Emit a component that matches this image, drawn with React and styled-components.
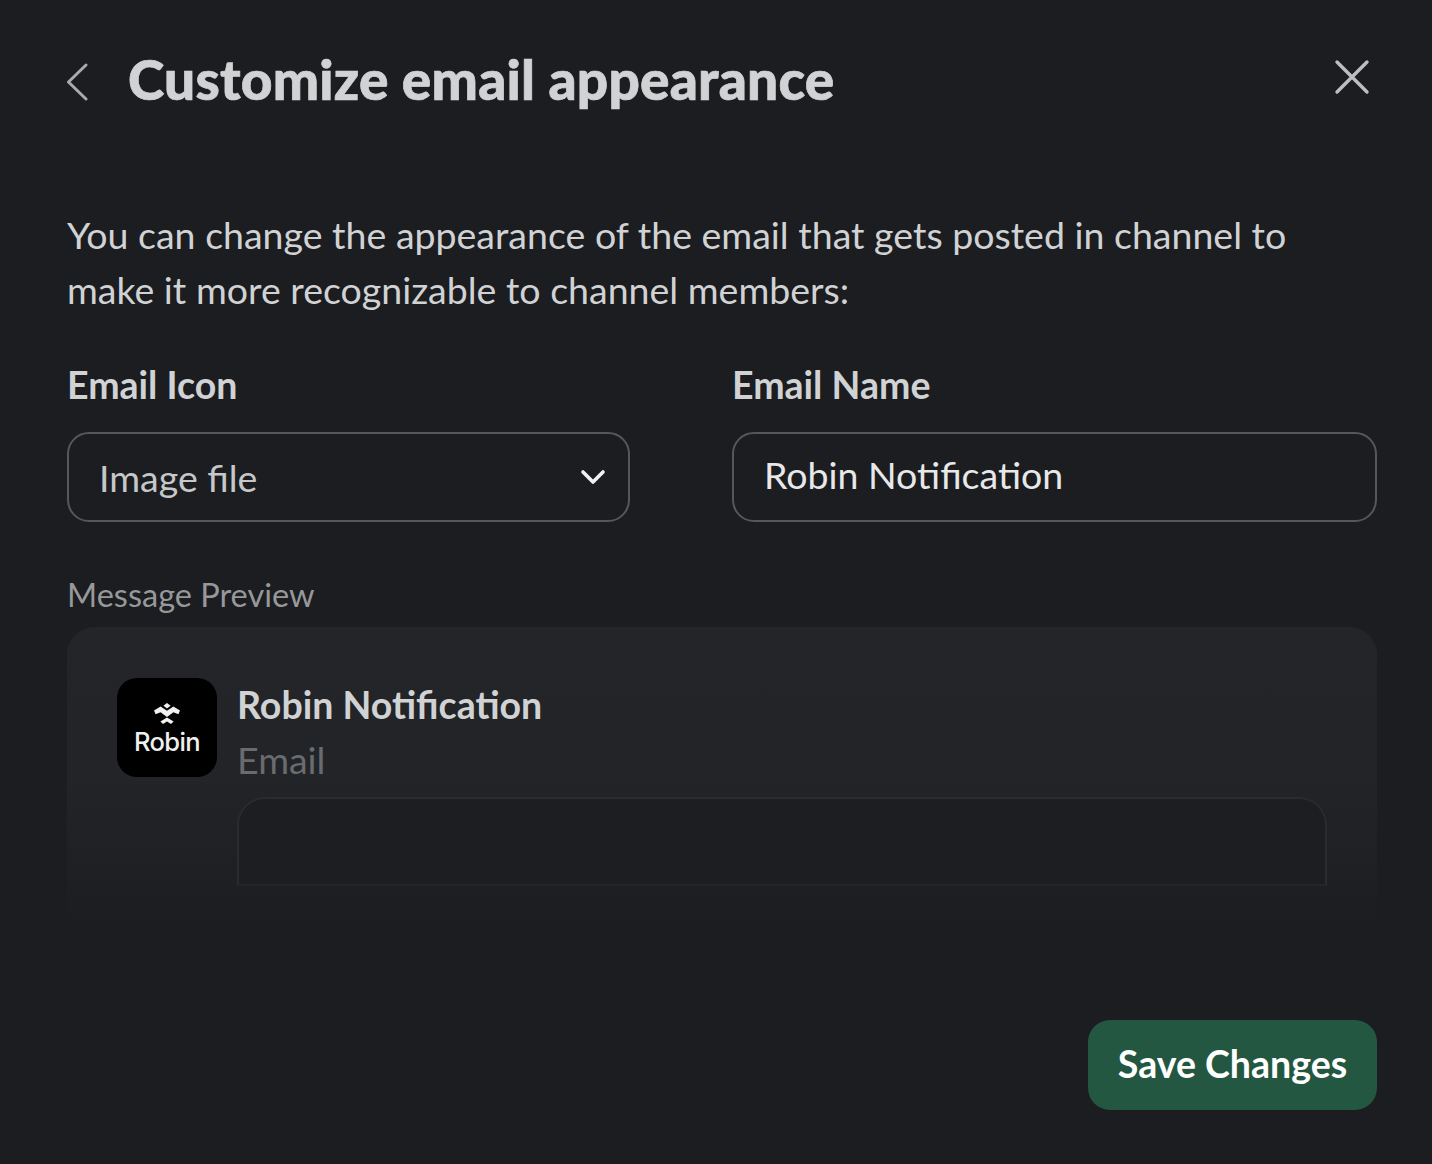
import React from 'react';
import styled, { createGlobalStyle } from 'styled-components';

const GlobalStyle = createGlobalStyle`
  html, body {
    margin: 0;
    padding: 0;
    background: #1b1d21;
  }
  * {
    box-sizing: border-box;
  }
`;

const Modal = styled.div`
  width: 1432px;
  height: 1164px;
  padding: 44px 55px 54px 67px;
  background: #1b1d21;
  font-family: Lato, 'Liberation Sans', sans-serif;
  display: flex;
  flex-direction: column;
`;

const Header = styled.header`
  height: 72px;
  display: flex;
  align-items: center;
`;

const BackButton = styled.button`
  width: 61px;
  height: 48px;
  padding: 4px 0 0;
  border: none;
  background: none;
  color: #a9aaac;
  display: flex;
  align-items: center;
  justify-content: flex-start;
`;

const Title = styled.h1`
  flex: 1;
  margin: 0 0 2px;
  font-size: 55px;
  line-height: 70px;
  font-weight: 900;
  letter-spacing: 0.2px;
  -webkit-text-stroke: 0.7px #d1d2d3;
  color: #d1d2d3;
`;

const CloseButton = styled.button`
  width: 48px;
  height: 48px;
  padding: 0;
  border: none;
  background: none;
  color: #bdbec0;
  display: flex;
  align-items: center;
  justify-content: center;
  margin-right: 1px;
  margin-top: -7px;
`;

const Intro = styled.p`
  margin: 91px 0 0;
  font-size: 37.5px;
  line-height: 55px;
  font-weight: 400;
  color: #d1d2d3;
`;

const Fields = styled.div`
  margin-top: 41px;
  display: grid;
  grid-template-columns: 563px 645px;
  column-gap: 102px;
`;

const Field = styled.div`
  display: flex;
  flex-direction: column;
`;

const Label = styled.label`
  font-size: 37.5px;
  line-height: 54px;
  font-weight: 700;
  color: #d1d2d3;
  margin-bottom: 20px;
`;

const SelectBox = styled.div`
  height: 90px;
  padding: 0 22px 0 30px;
  border: 2px solid #55575a;
  border-radius: 22px;
  display: flex;
  align-items: center;
  justify-content: space-between;
  font-size: 37.5px;
  color: #c6c7c8;
`;

const TextInput = styled.input`
  height: 90px;
  width: 100%;
  padding: 0 30px 6px;
  border: 2px solid #55575a;
  border-radius: 22px;
  background: transparent;
  font-family: inherit;
  font-size: 37.5px;
  color: #e8e8e8;
  outline: none;
`;

const PreviewLabel = styled.div`
  margin-top: 50px;
  font-size: 32.5px;
  line-height: 46px;
  color: #97989a;
`;

const PreviewCard = styled.section`
  margin-top: 9px;
  height: 304px;
  padding: 51px 50px 0;
  border-radius: 28px 28px 0 0;
  background: linear-gradient(180deg, #232529 0%, #222428 50%, #1b1d21 100%);
  display: flex;
  gap: 20px;
`;

const AppIcon = styled.div`
  width: 100px;
  height: 99px;
  flex: none;
  border-radius: 20px;
  background: #000;
  color: #f0f0f0;
  display: flex;
  flex-direction: column;
  align-items: center;
  padding-top: 25px;
  font-family: Inter, Lato, sans-serif;
  font-size: 25.5px;
  line-height: 28px;
  font-weight: 500;
  letter-spacing: -0.6px;
  svg {
    margin-bottom: 4px;
  }
`;

const Message = styled.div`
  flex: 1;
  display: flex;
  flex-direction: column;
`;

const Sender = styled.div`
  font-size: 37.5px;
  line-height: 54px;
  font-weight: 700;
  color: #d1d2d3;
`;

const Kind = styled.div`
  font-size: 37.5px;
  line-height: 55px;
  color: #6a6b6e;
`;

const EmailFrame = styled.div`
  margin-top: 10px;
  height: 89px;
  border: 2px solid #292b2f;
  border-bottom-color: #232528;
  border-radius: 28px 28px 0 0;
  background: #1c1e21;
`;

const Footer = styled.footer`
  margin-top: auto;
  display: flex;
  justify-content: flex-end;
`;

const SaveButton = styled.button`
  width: 289px;
  height: 90px;
  padding: 0 0 4px;
  border: none;
  border-radius: 22px;
  background: #245741;
  color: #fff;
  font-family: inherit;
  font-size: 37.5px;
  font-weight: 700;
`;

const BackIcon = () => (
  <svg width="22" height="38" viewBox="0 0 22 38" fill="none" stroke="currentColor" strokeWidth="3" strokeLinecap="round" strokeLinejoin="round">
    <path d="M19 2 L1.5 19 L19 36" />
  </svg>
);

const CloseIcon = () => (
  <svg width="36" height="36" viewBox="0 0 36 36" fill="none" stroke="currentColor" strokeWidth="3.4" strokeLinecap="round">
    <path d="M3 3 L33 33 M33 3 L3 33" />
  </svg>
);

const CaretIcon = () => (
  <svg width="26" height="16" viewBox="0 0 26 16" fill="none" stroke="#f2f2f2" strokeWidth="3.6" strokeLinecap="round" strokeLinejoin="round">
    <path d="M3 3 L13 13 L23 3" />
  </svg>
);

const RobinMark = () => (
  <svg width="26" height="21" viewBox="0 0 26 21" fill="currentColor">
    <path d="M13 0l3.6 2.7L13 5.4 9.4 2.7z" />
    <path d="M0 7.6L6.6 3.6 13 7.8l6.4-4.2L26 7.6l-1.6 3.6-5-2L13 14 6.6 9.2l-5 2z" />
    <path d="M13 14.6l6.6 3.8-2.6 2.6-4-2.6-4 2.6-2.6-2.6z" />
  </svg>
);

const App = () => (
  <>
    <GlobalStyle />
    <Modal>
      <Header>
        <BackButton aria-label="Back">
          <BackIcon />
        </BackButton>
        <Title>Customize email appearance</Title>
        <CloseButton aria-label="Close">
          <CloseIcon />
        </CloseButton>
      </Header>

      <Intro>
        You can change the appearance of the email that gets posted in channel to
        <br />
        make it more recognizable to channel members:
      </Intro>

      <Fields>
        <Field>
          <Label>Email Icon</Label>
          <SelectBox>
            <span>Image file</span>
            <CaretIcon />
          </SelectBox>
        </Field>
        <Field>
          <Label>Email Name</Label>
          <TextInput defaultValue="Robin Notification" />
        </Field>
      </Fields>

      <PreviewLabel>Message Preview</PreviewLabel>
      <PreviewCard>
        <AppIcon>
          <RobinMark />
          Robin
        </AppIcon>
        <Message>
          <Sender>Robin Notification</Sender>
          <Kind>Email</Kind>
          <EmailFrame />
        </Message>
      </PreviewCard>

      <Footer>
        <SaveButton>Save Changes</SaveButton>
      </Footer>
    </Modal>
  </>
);

export default App;
